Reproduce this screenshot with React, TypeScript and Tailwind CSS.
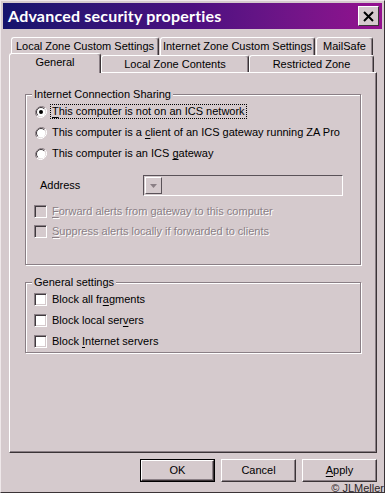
import React from 'react';

// Win2k style dialog, pinkish colour scheme
const BG = 'bg-[#d5cacd]';

function Radio({ checked }: { checked?: boolean }) {
  return (
    <svg width="12" height="12" viewBox="0 0 12 12" className="shrink-0">
      <path d="M10.2 1.8A6 6 0 0 0 1.8 10.2" fill="none" stroke="#8a7f85" strokeWidth="1" />
      <path d="M1.8 10.2A6 6 0 0 0 10.2 1.8" fill="none" stroke="#ffffff" strokeWidth="1" />
      <circle cx="6" cy="6" r="4.5" fill="#ffffff" />
      <path d="M9.2 2.8A4.5 4.5 0 0 0 2.8 9.2" fill="none" stroke="#403a3e" strokeWidth="1" />
      {checked && <circle cx="6" cy="6" r="2" fill="#000000" />}
    </svg>
  );
}

function Check({ disabled }: { disabled?: boolean }) {
  return (
    <div
      className={`w-[13px] h-[13px] shrink-0 border-t border-l border-[#8a7f85] border-r border-b border-r-white border-b-white ${
        disabled ? 'bg-[#d5cacd]' : 'bg-white'
      } shadow-[inset_1px_1px_0_#403a3e,inset_-1px_-1px_0_#d5cacd]`}
    />
  );
}

function U({ children }: { children: React.ReactNode }) {
  return <span className="underline underline-offset-2">{children}</span>;
}

function Group({ title, className, children }: { title: string; className: string; children: React.ReactNode }) {
  return (
    <div className={`relative ml-[15px] w-[336px] border border-[#8a7f85] shadow-[1px_1px_0_#ffffff,inset_1px_1px_0_#ffffff] ${className}`}>
      <span className={`absolute -top-[8px] left-[6px] px-[2px] leading-[14px] ${BG}`}>{title}</span>
      {children}
    </div>
  );
}

export default function App() {
  const disabledText = 'text-[#8a7f85] [text-shadow:1px_1px_0_#ffffff]';
  return (
    <div
      className={`relative w-[385px] h-[493px] overflow-hidden ${BG} border-t border-l border-[#efe8ea] border-r border-b border-r-[#3a3336] border-b-[#3a3336] font-['Liberation_Sans',Arial,sans-serif] text-[11px] text-black`}
    >
      {/* Title bar */}
      <div className="mt-[2px] mx-[2px] h-[26px] flex items-center justify-between bg-gradient-to-r from-[#15136d] via-[#4c0f80] to-[#95108f] pl-[5px] pr-[3px]">
        <span className="text-white text-[16px] font-bold font-['Lato',sans-serif] tracking-[0.2px]">
          Advanced security properties
        </span>
        <div className={`w-[21px] h-[20px] flex items-center justify-center ${BG} border-t border-l border-white border-r border-b border-r-[#3a3336] border-b-[#3a3336]`}>
          <svg width="11" height="11" viewBox="0 0 11 11">
            <path d="M1 1L10 10M10 1L1 10" stroke="#000" strokeWidth="2" />
          </svg>
        </div>
      </div>

      {/* Tabs */}
      <div className="mt-[8px] ml-[8px]">
        <div className="flex ml-[2px] h-[18px] gap-[1px]">
          {[
            ['Local Zone Custom Settings', 'w-[148px]'],
            ['Internet Zone Custom Settings', 'w-[155px]'],
            ['MailSafe', 'w-[57px]'],
          ].map(([t, w]) => (
            <div
              key={t}
              className={`${w} h-full flex items-center justify-center rounded-t-[3px] border-t border-l border-white border-r border-r-[#3a3336] shadow-[inset_-1px_0_0_#8a7f85]`}
            >
              {t}
            </div>
          ))}
        </div>
        <div className="flex items-end h-[17px]">
          <div className={`relative z-10 -mb-[1px] w-[92px] h-[20px] flex items-center justify-center pb-[2px] rounded-t-[3px] ${BG} border-t border-l border-white border-r border-r-[#3a3336] shadow-[inset_-1px_0_0_#8a7f85]`}>
            General
          </div>
          <div className="w-[148px] h-[17px] flex items-center justify-center rounded-t-[3px] border-t border-l border-white border-r border-r-[#3a3336] shadow-[inset_-1px_0_0_#8a7f85]">
            Local Zone Contents
          </div>
          <div className="w-[125px] h-[17px] flex items-center justify-center rounded-t-[3px] border-t border-l border-white border-r border-r-[#3a3336] shadow-[inset_-1px_0_0_#8a7f85]">
            Restricted Zone
          </div>
        </div>

        {/* Panel */}
        <div className="w-[368px] h-[381px] border-t border-l border-white border-r border-b border-r-[#3a3336] border-b-[#3a3336] shadow-[inset_-1px_-1px_0_#8a7f85] pt-[21px]">
          <Group title="Internet Connection Sharing" className="h-[171px]">
            <div className="pt-[6px] pl-[9px]">
              <div className="h-[21px] flex items-center gap-[5px]">
                <Radio checked />
                <span className="border border-dotted border-black px-[1px] -ml-[2px] leading-[13px]">
                  <U>T</U>his computer is not on an ICS network
                </span>
              </div>
              <div className="h-[21px] flex items-center gap-[5px]">
                <Radio />
                <span>
                  This computer is a <U>c</U>lient of an ICS gateway running ZA Pro
                </span>
              </div>
              <div className="h-[21px] flex items-center gap-[5px]">
                <Radio />
                <span>
                  This computer is an ICS <U>g</U>ateway
                </span>
              </div>
              <div className="mt-[11px] flex items-center h-[21px]">
                <span className="w-[108px] pl-[5px]">Address</span>
                <div className="w-[200px] h-[21px] border-t border-l border-[#5a5258] border-r border-b border-r-white border-b-white flex items-center pl-[1px]">
                  <div className={`w-[17px] h-[17px] flex items-center justify-center ${BG} border-t border-l border-white border-r border-b border-r-[#5a5258] border-b-[#5a5258]`}>
                    <svg width="7" height="4" viewBox="0 0 7 4">
                      <path d="M0 0H7L3.5 4Z" fill="#8a7f85" />
                    </svg>
                  </div>
                </div>
              </div>
              <div className="mt-[5px] h-[20px] flex items-center gap-[5px] -ml-[1px]">
                <Check disabled />
                <span className={disabledText}>
                  <U>F</U>orward alerts from gateway to this computer
                </span>
              </div>
              <div className="h-[20px] flex items-center gap-[5px] -ml-[1px]">
                <Check disabled />
                <span className={disabledText}>
                  <U>S</U>uppress alerts locally if forwarded to clients
                </span>
              </div>
            </div>
          </Group>

          <Group title="General settings" className="h-[71px] mt-[17px]">
            <div className="pt-[6px] pl-[8px]">
              <div className="h-[21px] flex items-center gap-[5px]">
                <Check />
                <span>
                  Block all fr<U>a</U>gments
                </span>
              </div>
              <div className="h-[21px] flex items-center gap-[5px]">
                <Check />
                <span>
                  Block local ser<U>v</U>ers
                </span>
              </div>
              <div className="h-[21px] flex items-center gap-[5px]">
                <Check />
                <span>
                  Block <U>I</U>nternet servers
                </span>
              </div>
            </div>
          </Group>
        </div>
      </div>

      {/* Buttons */}
      <div className="mt-[6px] flex justify-end gap-[6px] pr-[7px]">
        <div className="w-[75px] h-[23px] border border-black">
          <div className="w-full h-full flex items-center justify-center border-t border-l border-white border-r border-b border-r-[#3a3336] border-b-[#3a3336] shadow-[inset_-1px_-1px_0_#8a7f85]">
            OK
          </div>
        </div>
        <div className="w-[75px] h-[23px] flex items-center justify-center border-t border-l border-white border-r border-b border-r-[#3a3336] border-b-[#3a3336] shadow-[inset_-1px_-1px_0_#8a7f85]">
          Cancel
        </div>
        <div className="w-[75px] h-[23px] flex items-center justify-center border-t border-l border-white border-r border-b border-r-[#3a3336] border-b-[#3a3336] shadow-[inset_-1px_-1px_0_#8a7f85]">
          <span>
            <U>A</U>pply
          </span>
        </div>
      </div>

      {/* Watermark */}
      <span className="absolute right-0 bottom-[-2px] text-[11px] leading-[12px] text-[#2a2427]">© JLMeller</span>
    </div>
  );
}
